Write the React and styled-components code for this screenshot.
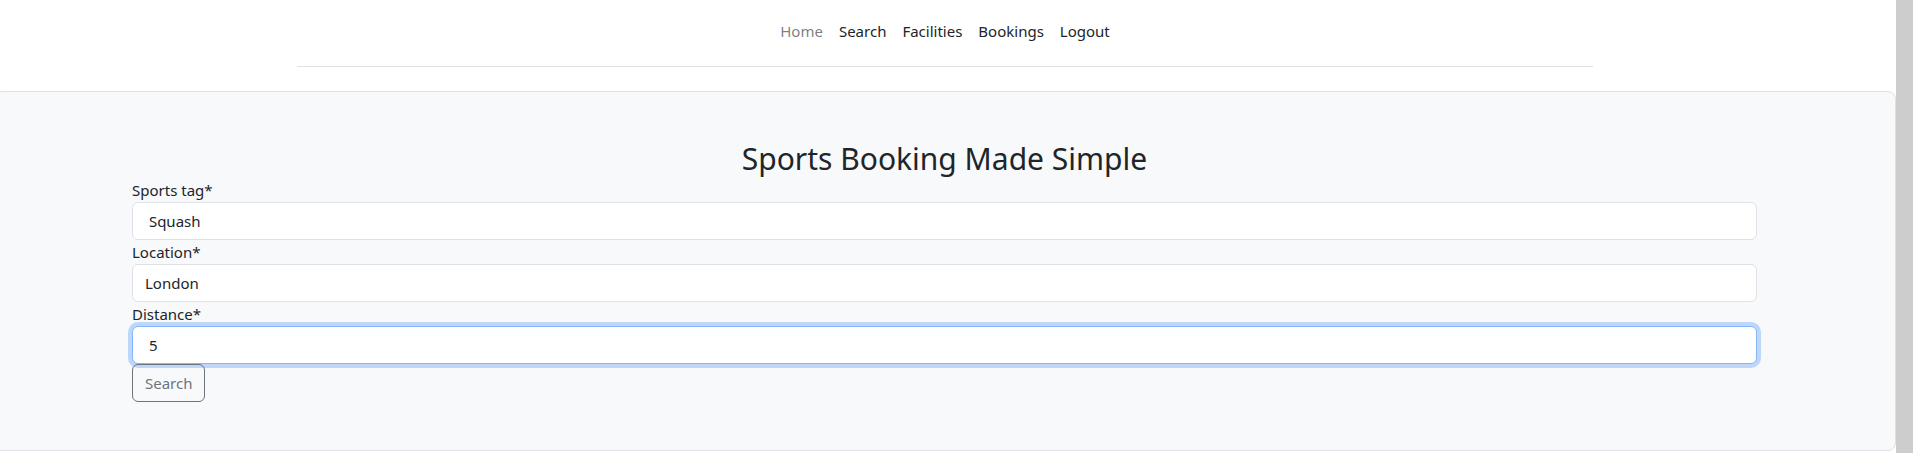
import React from "react";
import styled, { createGlobalStyle } from "styled-components";

const GlobalStyle = createGlobalStyle`
  html, body {
    overflow: hidden;
  }
  body {
    margin: 0;
    font-family: "Noto Sans", "Open Sans", sans-serif;
    font-size: 15px;
    line-height: 24px;
    color: #212529;
    background: #fff;
  }
  * {
    box-sizing: border-box;
  }
`;

const Shell = styled.div`
  display: flex;
  height: 100vh;
`;

const Page = styled.div`
  flex: 1;
  min-width: 0;
`;

const Scrollbar = styled.div`
  flex: 0 0 17px;
  background: #cdcdcd;
`;

const Header = styled.header`
  width: 1296px;
  margin: 0 0 24px calc((100% - 1296px) / 2 - 3px);
  padding: 11px 0 15px;
  border-bottom: 1px solid #dee2e6;
`;

const NavList = styled.ul`
  display: flex;
  justify-content: center;
  list-style: none;
  margin: 0;
  padding: 0;
`;

const NavLink = styled.a`
  display: block;
  padding: 8px 8px;
  line-height: 24px;
  text-decoration: none;
  color: ${(p) => (p.$active ? "#212529" : "rgba(33, 37, 41, 0.6)")};
  cursor: pointer;
`;

const Card = styled.section`
  margin-left: -7px;
  width: calc(100% + 7px);
  padding: 48px;
  background: #f8f9fa;
  border: 1px solid #dee2e6;
  border-radius: 8px;
`;

const Title = styled.h1`
  margin: 0;
  font-size: 30px;
  font-weight: 400;
  line-height: 38.4px;
  text-align: center;
`;

const Form = styled.form`
  display: flex;
  flex-direction: column;
  align-items: flex-start;
  padding: 0 90px;
`;

const Label = styled.label`
  display: block;
  line-height: 24px;
`;

const Input = styled.input`
  display: block;
  width: 100%;
  height: 38px;
  padding: 6px 12px;
  font: inherit;
  line-height: 24px;
  color: #212529;
  background: #fff;
  border: 1px solid ${(p) => (p.$focused ? "#86b7fe" : "#dee2e6")};
  border-radius: 6px;
  box-shadow: ${(p) => (p.$focused ? "0 0 0 4px rgba(13, 110, 253, 0.25)" : "none")};
  outline: none;
`;

const Button = styled.button`
  height: 38px;
  padding: 6px 12px;
  font: inherit;
  line-height: 24px;
  color: #6c757d;
  background: transparent;
  border: 1px solid #6c757d;
  border-radius: 6px;
  cursor: pointer;
`;

const links = [
  { text: "Home", active: false },
  { text: "Search", active: true },
  { text: "Facilities", active: true },
  { text: "Bookings", active: true },
  { text: "Logout", active: true },
];

const fields = [
  { label: "Sports tag*", value: " Squash" },
  { label: "Location*", value: "London" },
  { label: "Distance*", value: " 5", focused: true },
];

export default function App() {
  return (
    <Shell>
      <GlobalStyle />
      <Page>
        <Header>
          <NavList>
            {links.map((l) => (
              <li key={l.text}>
                <NavLink $active={l.active}>{l.text}</NavLink>
              </li>
            ))}
          </NavList>
        </Header>
        <Card>
          <Title>Sports Booking Made Simple</Title>
          <Form onSubmit={(e) => e.preventDefault()}>
            {fields.map((f) => (
              <React.Fragment key={f.label}>
                <Label>{f.label}</Label>
                <Input type="text" defaultValue={f.value} $focused={f.focused} />
              </React.Fragment>
            ))}
            <Button type="submit">Search</Button>
          </Form>
        </Card>
      </Page>
      <Scrollbar />
    </Shell>
  );
}
